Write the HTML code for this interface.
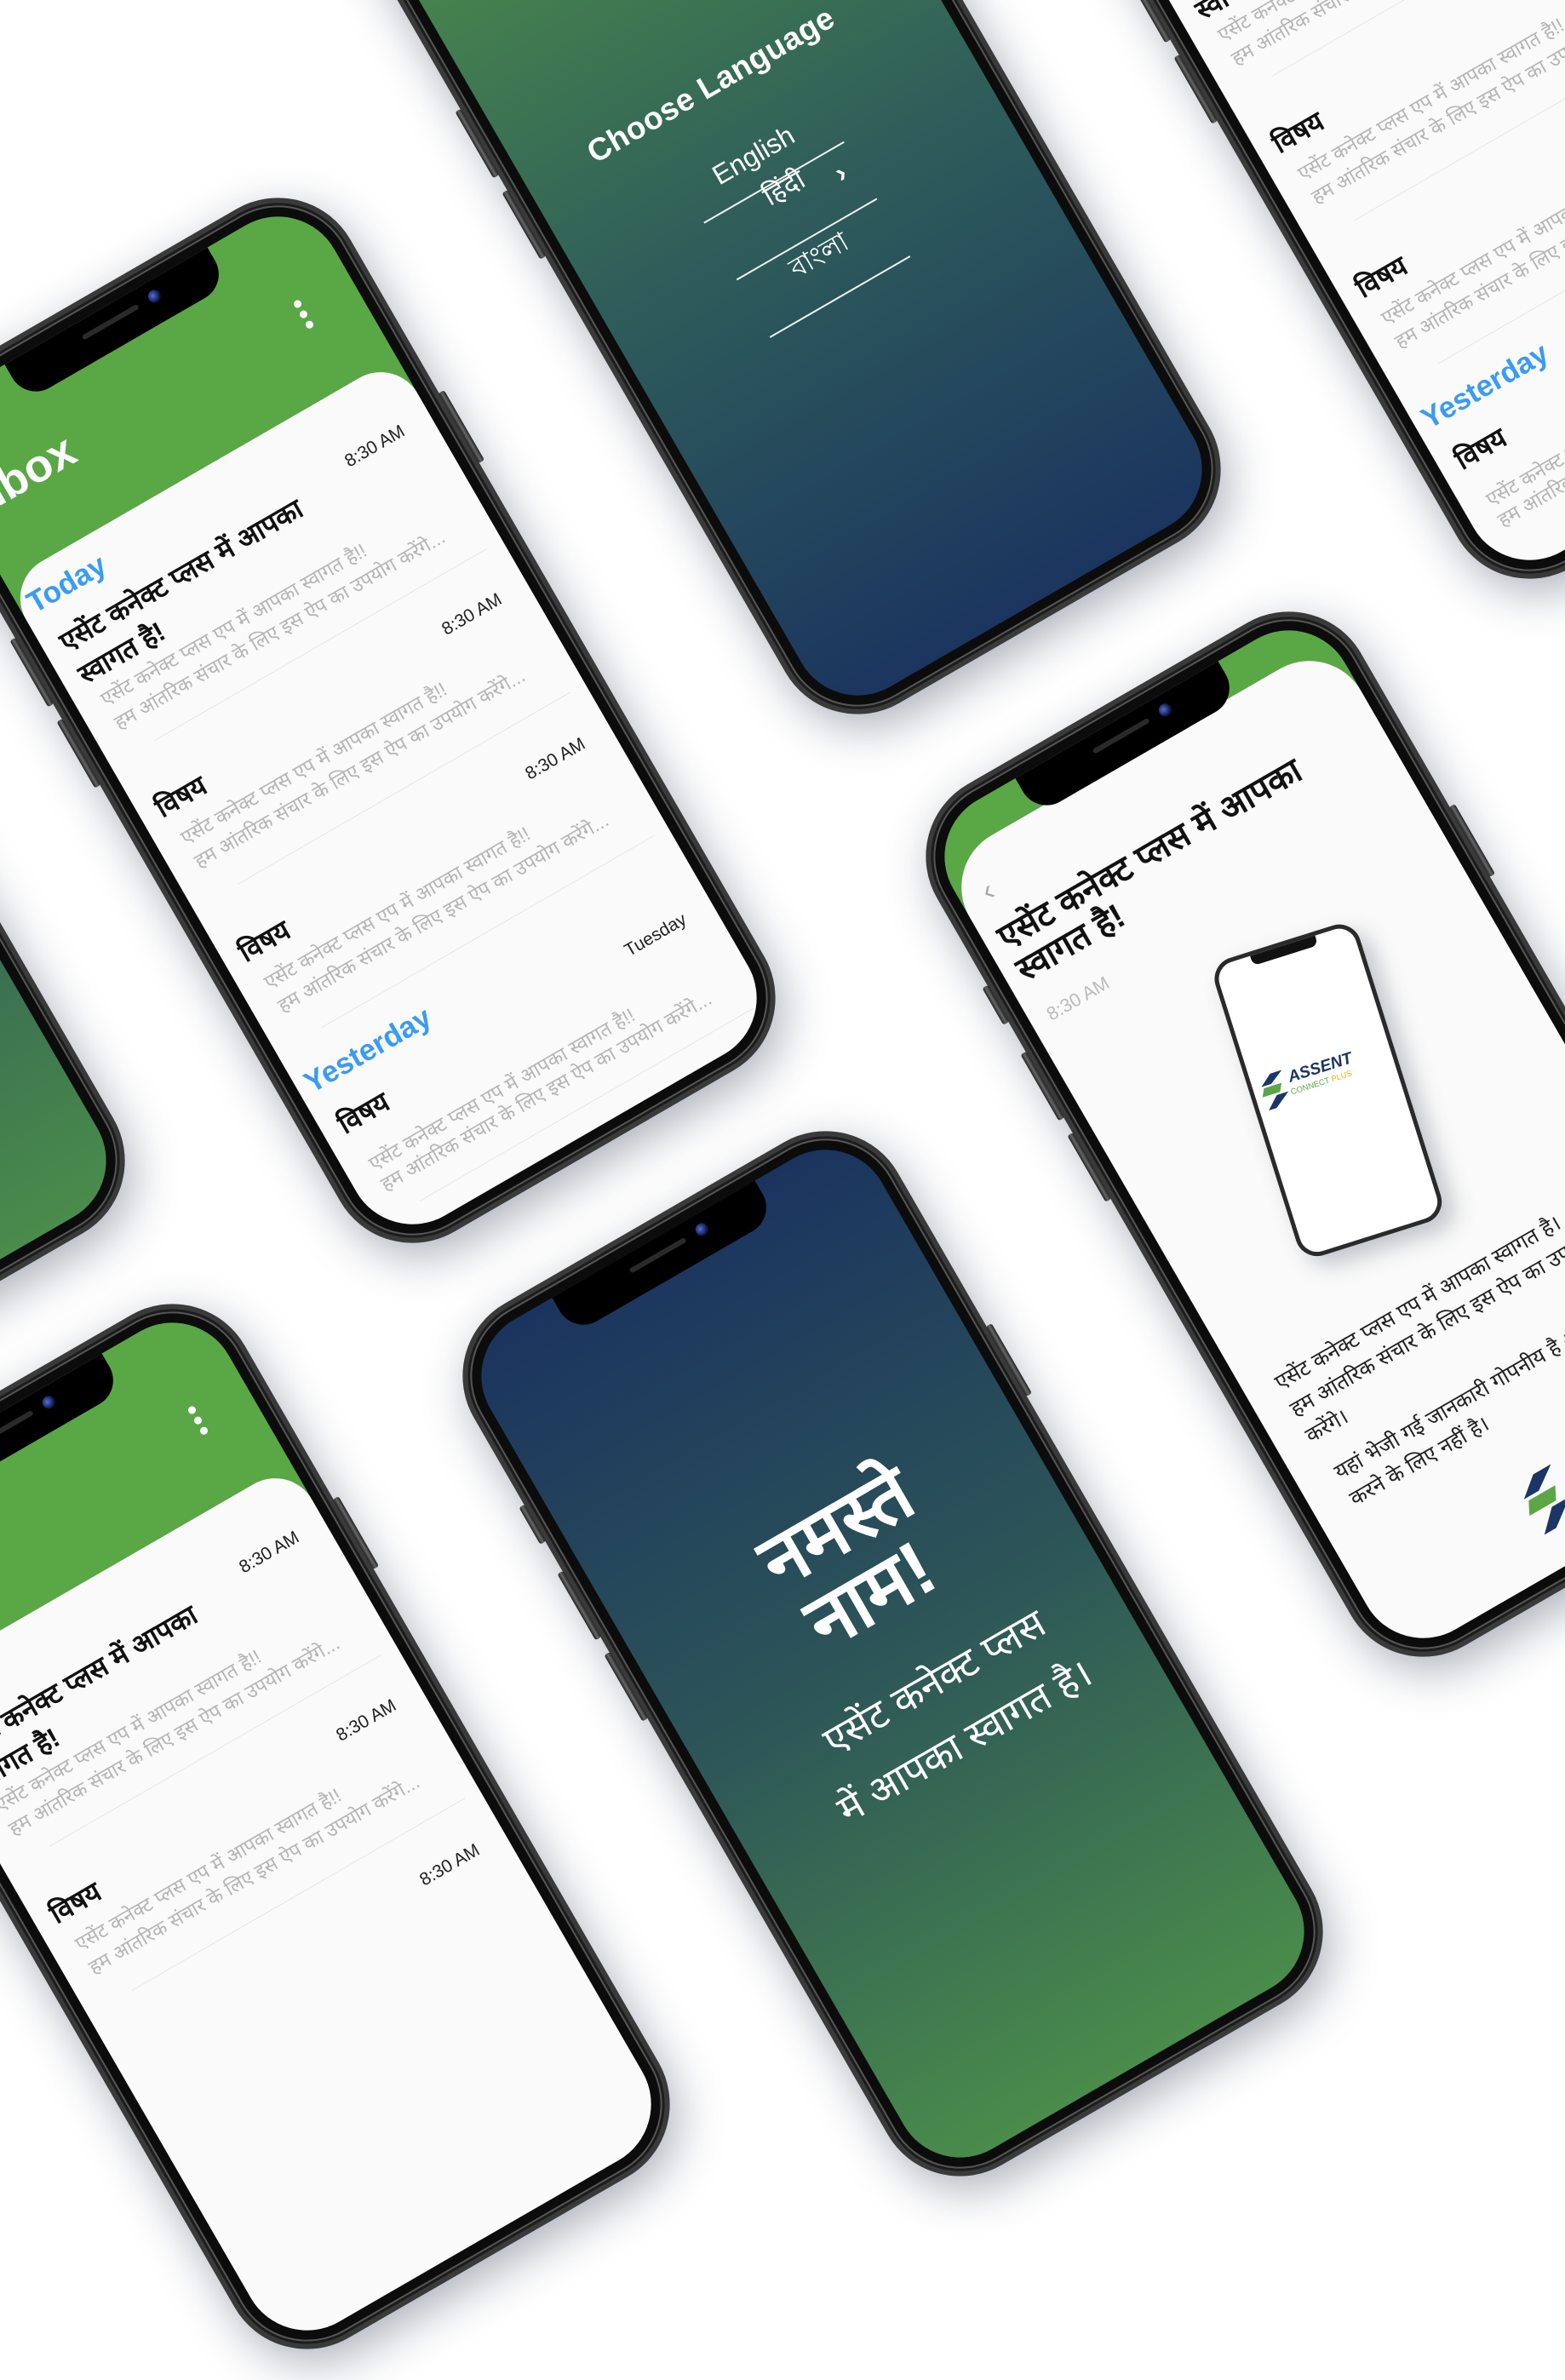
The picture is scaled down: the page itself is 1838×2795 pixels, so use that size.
<!DOCTYPE html>
<html><head><meta charset="utf-8">
<style>
*{margin:0;padding:0;box-sizing:border-box}
html,body{width:1838px;height:2192px;overflow:hidden;background:#fff;font-family:"Liberation Sans",sans-serif}
.phone{position:absolute;width:575px;height:1168px;border-radius:98px;background:#0c0c0c;border:6px solid #3a3a3a;transform:rotate(-30deg);box-shadow:0 18px 55px rgba(40,50,75,.38), inset 0 0 0 3px #1c1c1c, inset 0 0 0 5px #555}
.btn{position:absolute;width:8px;background:linear-gradient(90deg,#222,#666,#222);border-radius:3px}
.scr{position:absolute;left:16px;top:16px;width:531px;height:1124px;border-radius:76px;overflow:hidden}
.notch{position:absolute;left:128px;top:0;width:275px;height:50px;background:#000;border-radius:0 0 32px 32px;z-index:5}
.notch .sp{position:absolute;left:95px;top:16px;width:75px;height:6px;border-radius:3px;background:#2a2a2a}
.notch .cam{position:absolute;left:185px;top:11px;width:15px;height:15px;border-radius:50%;background:radial-gradient(circle at 40% 40%,#5a6fd0,#0d1a50 60%,#000)}
.abs{position:absolute;white-space:nowrap;line-height:1}
.green{background:#5aa746}
.panel{position:absolute;left:0;right:0;bottom:0;background:#fafafa}
.today{color:#3a9bf3;font-weight:bold;font-size:35px}
.tt{color:#111;font-weight:bold;font-size:32px}
.tm{color:#222;font-size:21px;right:36px}
.pv{color:#b5b5b5;font-size:23px}
.sep{position:absolute;height:1px;background:#e6e6e6;left:60px;right:20px}
.dot{position:absolute;width:9px;height:9px;border-radius:50%;background:#fff}
.gl{background:linear-gradient(180deg,#4e9049 0%,#2f5e5a 50%,#1b355f 100%)}
.gn{background:linear-gradient(180deg,#1b345f 0%,#2d5658 50%,#4a8c4b 100%)}
.w{color:#fff}
.ln{position:absolute;height:2px;background:#f2f2f2}
</style></head><body>

<!-- A inbox -->
<div class="phone" style="left:118px;top:262px">
 <div class="btn" style="right:-13px;top:300px;height:95px"></div>
 <div class="btn" style="left:-13px;top:210px;height:50px"></div>
 <div class="btn" style="left:-13px;top:300px;height:90px"></div>
 <div class="btn" style="left:-13px;top:410px;height:90px"></div>
 <div class="scr green">
  <div class="notch"><div class="sp"></div><div class="cam"></div></div>
  <div class="abs w" style="left:4px;top:96px;font-size:54px;font-weight:bold">Inbox</div>
  <div class="dot" style="left:457px;top:106px"></div><div class="dot" style="left:457px;top:120px"></div><div class="dot" style="left:457px;top:134px"></div>
  <div class="panel" style="top:222px;border-radius:50px 50px 0 0">
   <div class="abs today" style="left:12px;top:20px">Today</div>
   <div class="abs tm" style="top:68px">8:30 AM</div>
   <div class="abs tt" style="left:22px;top:80px">एसेंट कनेक्ट प्लस में आपका</div>
   <div class="abs tt" style="left:22px;top:124px">स्वागत है!</div>
   <div class="abs pv" style="left:30px;top:166px">एसेंट कनेक्ट प्लस एप में आपका स्वागत है!!</div>
   <div class="abs pv" style="left:30px;top:198px">हम आंतरिक संचार के लिए इस ऐप का उपयोग करेंगे...</div>
   <div class="sep" style="top:248px"></div>
   <div class="abs tm" style="top:296px">8:30 AM</div>
   <div class="abs tt" style="left:22px;top:305px">विषय</div>
   <div class="abs pv" style="left:30px;top:354px">एसेंट कनेक्ट प्लस एप में आपका स्वागत है!!</div>
   <div class="abs pv" style="left:30px;top:386px">हम आंतरिक संचार के लिए इस ऐप का उपयोग करेंगे...</div>
   <div class="sep" style="top:443px"></div>
   <div class="abs tm" style="top:492px">8:30 AM</div>
   <div class="abs tt" style="left:22px;top:501px">विषय</div>
   <div class="abs pv" style="left:30px;top:550px">एसेंट कनेक्ट प्लस एप में आपका स्वागत है!!</div>
   <div class="abs pv" style="left:30px;top:582px">हम आंतरिक संचार के लिए इस ऐप का उपयोग करेंगे...</div>
   <div class="sep" style="top:638px"></div>
   <div class="abs today" style="left:12px;top:671px">Yesterday</div>
   <div class="abs tm" style="top:730px">Tuesday</div>
   <div class="abs tt" style="left:22px;top:734px">विषय</div>
   <div class="abs pv" style="left:30px;top:796px">एसेंट कनेक्ट प्लस एप में आपका स्वागत है!!</div>
   <div class="abs pv" style="left:30px;top:824px">हम आंतरिक संचार के लिए इस ऐप का उपयोग करेंगे...</div>
   <div class="sep" style="top:872px"></div>
  </div>
 </div>
</div>

<!-- C inbox (top right) -->
<div class="phone" style="left:1430px;top:-518px">
 <div class="btn" style="left:-13px;top:300px;height:90px"></div>
 <div class="btn" style="left:-13px;top:410px;height:90px"></div>
 <div class="scr green">
  <div class="notch"><div class="sp"></div><div class="cam"></div></div>
  <div class="abs w" style="left:4px;top:96px;font-size:54px;font-weight:bold">Inbox</div>
  <div class="panel" style="top:222px;border-radius:50px 50px 0 0">
   <div class="abs today" style="left:12px;top:20px">Today</div>
   <div class="abs tm" style="top:68px">8:30 AM</div>
   <div class="abs tt" style="left:22px;top:80px">एसेंट कनेक्ट प्लस में आपका</div>
   <div class="abs tt" style="left:22px;top:124px">स्वागत है!</div>
   <div class="abs pv" style="left:30px;top:166px">एसेंट कनेक्ट प्लस एप में आपका स्वागत है!!</div>
   <div class="abs pv" style="left:30px;top:198px">हम आंतरिक संचार के लिए इस ऐप का उपयोग करेंगे...</div>
   <div class="sep" style="top:248px"></div>
   <div class="abs tm" style="top:296px">8:30 AM</div>
   <div class="abs tt" style="left:22px;top:305px">विषय</div>
   <div class="abs pv" style="left:30px;top:354px">एसेंट कनेक्ट प्लस एप में आपका स्वागत है!!</div>
   <div class="abs pv" style="left:30px;top:386px">हम आंतरिक संचार के लिए इस ऐप का उपयोग करेंगे...</div>
   <div class="sep" style="top:443px"></div>
   <div class="abs tm" style="top:492px">8:30 AM</div>
   <div class="abs tt" style="left:22px;top:501px">विषय</div>
   <div class="abs pv" style="left:30px;top:550px">एसेंट कनेक्ट प्लस एप में आपका स्वागत है!!</div>
   <div class="abs pv" style="left:30px;top:582px">हम आंतरिक संचार के लिए इस ऐप का उपयोग करेंगे...</div>
   <div class="sep" style="top:638px"></div>
   <div class="abs today" style="left:12px;top:671px">Yesterday</div>
   <div class="abs tm" style="top:730px">Tuesday</div>
   <div class="abs tt" style="left:22px;top:734px">विषय</div>
   <div class="abs pv" style="left:30px;top:796px">एसेंट कनेक्ट प्लस एप में आपका स्वागत है!!</div>
   <div class="abs pv" style="left:30px;top:824px">हम आंतरिक संचार के लिए इस ऐप का उपयोग करेंगे...</div>
  </div>
 </div>
</div>

<!-- F inbox (bottom left) -->
<div class="phone" style="left:-6px;top:1561px">
 <div class="btn" style="right:-13px;top:300px;height:95px"></div>
 <div class="scr green">
  <div class="notch"><div class="sp"></div><div class="cam"></div></div>
  <div class="abs w" style="left:4px;top:96px;font-size:54px;font-weight:bold">Inbox</div>
  <div class="dot" style="left:457px;top:106px"></div><div class="dot" style="left:457px;top:120px"></div><div class="dot" style="left:457px;top:134px"></div>
  <div class="panel" style="top:222px;border-radius:50px 50px 0 0">
   <div class="abs today" style="left:12px;top:20px">Today</div>
   <div class="abs tm" style="top:68px">8:30 AM</div>
   <div class="abs tt" style="left:22px;top:80px">एसेंट कनेक्ट प्लस में आपका</div>
   <div class="abs tt" style="left:22px;top:124px">स्वागत है!</div>
   <div class="abs pv" style="left:30px;top:166px">एसेंट कनेक्ट प्लस एप में आपका स्वागत है!!</div>
   <div class="abs pv" style="left:30px;top:198px">हम आंतरिक संचार के लिए इस ऐप का उपयोग करेंगे...</div>
   <div class="sep" style="top:248px"></div>
   <div class="abs tm" style="top:296px">8:30 AM</div>
   <div class="abs tt" style="left:22px;top:305px">विषय</div>
   <div class="abs pv" style="left:30px;top:354px">एसेंट कनेक्ट प्लस एप में आपका स्वागत है!!</div>
   <div class="abs pv" style="left:30px;top:386px">हम आंतरिक संचार के लिए इस ऐप का उपयोग करेंगे...</div>
   <div class="sep" style="top:443px"></div>
   <div class="abs tm" style="top:492px">8:30 AM</div>
  </div>
 </div>
</div>

<!-- G left teal -->
<div class="phone" style="left:-646px;top:453px">
 <div class="scr gn"></div>
</div>

<!-- B language -->
<div class="phone" style="left:641px;top:-359px">
 <div class="btn" style="right:-13px;top:300px;height:95px"></div>
 <div class="btn" style="left:-13px;top:300px;height:90px"></div>
 <div class="btn" style="left:-13px;top:410px;height:90px"></div>
 <div class="scr gl">
  <div class="notch"><div class="sp"></div><div class="cam"></div></div>
  <div class="abs w" style="left:0;width:494px;text-align:center;top:388px;font-size:37px;font-weight:bold;letter-spacing:0.5px">Choose Language</div>
  <div class="abs w" style="left:0;width:498px;text-align:center;top:487px;font-size:32px">English</div>
  <div class="ln" style="left:159px;width:190px;top:542px"></div>
  <div class="abs w" style="left:0;width:522px;text-align:center;top:538px;font-size:32px">हिंदी</div>
  <div class="abs w" style="left:322px;top:556px;font-size:32px;font-weight:bold">›</div>
  <div class="ln" style="left:159px;width:190px;top:619px"></div>
  <div class="abs w" style="left:0;width:514px;text-align:center;top:627px;font-size:32px">বাংলা</div>
  <div class="ln" style="left:159px;width:190px;top:697px"></div>
 </div>
</div>

<!-- D detail -->
<div class="phone" style="left:1305px;top:748px">
 <div class="btn" style="left:-13px;top:210px;height:50px"></div>
 <div class="btn" style="left:-13px;top:300px;height:90px"></div>
 <div class="btn" style="left:-13px;top:410px;height:90px"></div>
 <div class="btn" style="right:-13px;top:300px;height:95px"></div>
 <div class="scr green">
  <div class="notch"><div class="sp"></div><div class="cam"></div></div>
  <div class="panel" style="top:44px;border-radius:70px 70px 0 0">
   <div class="abs" style="left:28px;top:36px;font-size:36px;color:#aaa">‹</div>
   <div class="abs" style="left:18px;top:92px;font-size:40px;font-weight:bold;color:#111">एसेंट कनेक्ट प्लस में आपका</div>
   <div class="abs" style="left:18px;top:136px;font-size:40px;font-weight:bold;color:#111">स्वागत है!</div>
   <div class="abs" style="left:22px;top:206px;font-size:22px;color:#bbb">8:30 AM</div>
   <div style="position:absolute;left:174px;top:274px;width:178px;height:366px;border-radius:26px;background:#fff;border:5px solid #2a2a2a;transform:rotate(12.5deg);box-shadow:10px 14px 26px rgba(60,70,90,.3)">
    <div style="position:absolute;left:44px;top:0;width:80px;height:12px;background:#111;border-radius:0 0 8px 8px"></div>
    <svg style="position:absolute;left:8px;top:134px" width="156" height="48" viewBox="0 0 130 40">
     <polygon points="14,4 26,4 12,14 2,14" fill="#1b3567"/>
     <polygon points="4,16 22,16 18,24 0,24" fill="#5aa746"/>
     <polygon points="14,26 26,26 10,38 2,38" fill="#1b3567"/>
     <text x="30" y="18" font-family="Liberation Sans" font-weight="bold" font-style="italic" font-size="16" fill="#1b3567">ASSENT</text>
     <text x="28" y="30" font-family="Liberation Sans" font-size="8" fill="#5aa746">CONNECT <tspan fill="#e8b21c">PLUS</tspan></text>
    </svg>
   </div>
   <div class="abs" style="left:38px;top:714px;font-size:25px;color:#222">एसेंट कनेक्ट प्लस एप में आपका स्वागत है।</div>
   <div class="abs" style="left:38px;top:750px;font-size:25px;color:#222">हम आंतरिक संचार के लिए इस ऐप का उपयोग</div>
   <div class="abs" style="left:38px;top:786px;font-size:25px;color:#222">करेंगे।</div>
   <div class="abs" style="left:46px;top:840px;font-size:25px;color:#222">यहां भेजी गई जानकारी गोपनीय है और साझा</div>
   <div class="abs" style="left:46px;top:876px;font-size:25px;color:#222">करने के लिए नहीं है।</div>
   <svg style="position:absolute;left:218px;top:960px" width="260" height="80" viewBox="0 0 130 40">
     <polygon points="14,4 26,4 12,14 2,14" fill="#1b3567"/>
     <polygon points="4,16 22,16 18,24 0,24" fill="#5aa746"/>
     <polygon points="14,26 26,26 10,38 2,38" fill="#1b3567"/>
     <text x="30" y="18" font-family="Liberation Sans" font-weight="bold" font-style="italic" font-size="16" fill="#1b3567">ASSENT</text>
     <text x="28" y="30" font-family="Liberation Sans" font-size="8" fill="#5aa746">CONNECT <tspan fill="#e8b21c">PLUS</tspan></text>
   </svg>
  </div>
 </div>
</div>

<!-- E namaste -->
<div class="phone" style="left:761px;top:1358px">
 <div class="btn" style="left:-13px;top:210px;height:50px"></div>
 <div class="btn" style="left:-13px;top:300px;height:90px"></div>
 <div class="btn" style="left:-13px;top:410px;height:90px"></div>
 <div class="btn" style="right:-13px;top:300px;height:95px"></div>
 <div class="scr gn">
  <div class="notch"><div class="sp"></div><div class="cam"></div></div>
  <div class="abs w" style="left:0;width:564px;text-align:center;top:356px;font-size:90px;font-weight:bold">नमस्ते</div>
  <div class="abs w" style="left:0;width:554px;text-align:center;top:445px;font-size:90px;font-weight:bold">नाम!</div>
  <div class="abs w" style="left:0;width:582px;text-align:center;top:592px;font-size:46px">एसेंट कनेक्ट प्लस</div>
  <div class="abs w" style="left:0;width:574px;text-align:center;top:670px;font-size:46px">में आपका स्वागत है।</div>
 </div>
</div>

</body></html>
